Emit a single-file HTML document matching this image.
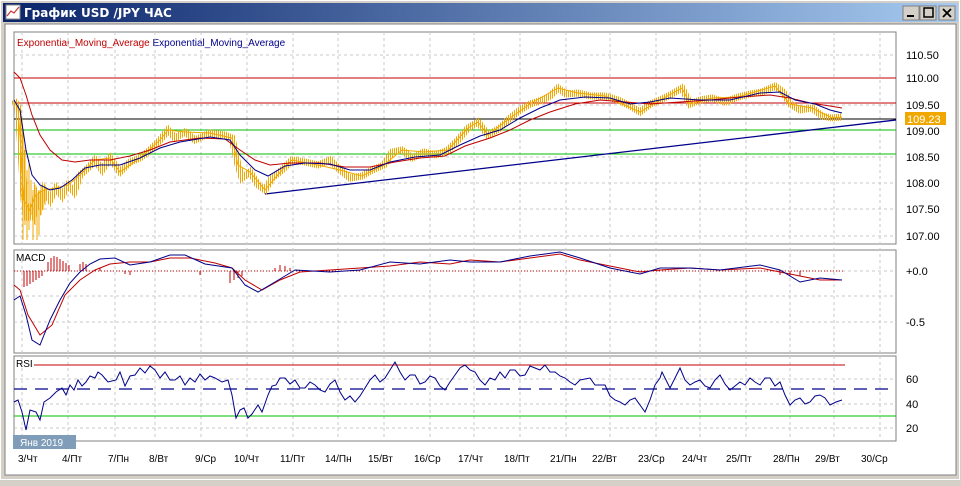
<!DOCTYPE html>
<html><head><meta charset="utf-8"><style>
body{margin:0;width:961px;height:481px;overflow:hidden;background:#d4d0c8;font-family:"Liberation Sans",sans-serif}
</style></head><body>
<svg width="961" height="481" xmlns="http://www.w3.org/2000/svg" font-family="Liberation Sans, DejaVu Sans, sans-serif">
<defs><linearGradient id="tb" x1="0" x2="1"><stop offset="0" stop-color="#0a246a"/><stop offset="1" stop-color="#a6caf0"/></linearGradient>
<pattern id="st" width="2" height="4" patternUnits="userSpaceOnUse"><rect width="1" height="4" fill="#f0a800"/></pattern></defs>
<rect x="0" y="0" width="961" height="481" fill="#d4d0c8"/>
<rect x="0.5" y="0.5" width="959" height="479" fill="none" stroke="#fff"/>
<rect x="3" y="3" width="955" height="19" fill="url(#tb)"/>
<rect x="6" y="5" width="14" height="14" fill="#fff" stroke="#888"/>
<polyline points="7,16 11,11 14,13 19,7" fill="none" stroke="#c33" stroke-width="1.2"/>
<text x="24" y="17" fill="#fff" font-weight="bold" font-size="12" font-family="DejaVu Sans, sans-serif">График USD /JPY  ЧАС</text>
<g fill="#d4d0c8" stroke="#808080"><rect x="903" y="6" width="16" height="14"/><rect x="920" y="6" width="16" height="14"/><rect x="939" y="6" width="16" height="14"/></g>
<rect x="907" y="15" width="7" height="2" fill="#000"/>
<rect x="924" y="8" width="9" height="9" fill="none" stroke="#000" stroke-width="1.5"/>
<path d="M943,9 L951,17 M951,9 L943,17" stroke="#000" stroke-width="1.8"/>
<rect x="5" y="24" width="951" height="451" fill="#fff" stroke="#808080"/>
<text x="17" y="46" font-size="10" fill="#c00000">Exponential_Moving_Average <tspan fill="#00008b">Exponential_Moving_Average</tspan></text>
<g fill="none" stroke="#808080"><rect x="14" y="32" width="882" height="212"/><rect x="14" y="250" width="882" height="103"/><rect x="14" y="356" width="882" height="85"/></g>
<g stroke="#c8c8c8" stroke-dasharray="3,3">
<path d="M22,32V441M68,32V441M115,32V441M155,32V441M201,32V441M247,32V441M293,32V441M338,32V441M384,32V441M430,32V441M474,32V441M520,32V441M566,32V441M610,32V441M656,32V441M700,32V441M746,32V441M790,32V441M834,32V441M880,32V441"/>
<path d="M14,55H896M14,105H896M14,157H896M14,183H896M14,209H896M14,236H896M14,271H896M14,296H896M14,322H896M14,379H896M14,404H896M14,428H896"/>
</g>
<line x1="14" y1="78" x2="896" y2="78" stroke="#c00000"/>
<line x1="14" y1="103" x2="896" y2="103" stroke="#c00000"/>
<line x1="14" y1="119" x2="896" y2="119" stroke="#000"/>
<line x1="14" y1="130" x2="896" y2="130" stroke="#00c000"/>
<line x1="14" y1="154" x2="896" y2="154" stroke="#00c000"/>
<line x1="265" y1="194" x2="896" y2="120" stroke="#00008b" stroke-width="1.3"/>
<path d="M21,110V200M23,130V240M25,150V225M27,170V240M29,160V230M31,180V215M33,190V240M35,185V225M37,195V240M39,190V235M41,185V215M43,190V210M45,185V205" stroke="#f0a800" stroke-width="1"/>
<polyline fill="none" stroke="url(#st)" stroke-width="7" points="14,100 18,108 21,150 24,200 27,220 30,210 33,215 36,195 40,205 44,190 50,200 56,188 62,196 68,185 74,192 80,175 88,168 95,160 102,170 110,158 120,172 130,162 140,158 150,150 160,140 168,130 175,138 185,132 195,140 210,133 225,135 232,138 238,165 242,178 250,172 258,185 265,190 272,178 282,170 292,160 305,162 318,165 330,160 340,170 350,178 362,176 372,170 384,165 392,152 402,150 412,158 424,152 436,155 448,150 458,140 468,128 478,122 488,135 500,128 510,118 520,110 530,104 542,100 550,96 558,88 566,94 578,93 590,96 605,96 618,100 630,106 640,112 650,104 660,100 670,95 682,88 690,104 700,100 712,98 725,102 738,97 750,94 762,92 775,86 783,92 790,104 800,110 812,108 822,116 832,118 842,117"/>
<polyline fill="none" stroke="#f0a800" stroke-width="1" points="14,100 18,108 21,150 24,200 30,210 36,195 44,190 56,188 68,185 80,175 95,160 110,158 120,172 140,158 160,140 168,130 185,132 210,133 232,138 238,165 250,172 265,190 282,170 292,160 318,165 340,170 362,176 384,165 402,150 424,152 448,150 468,128 478,122 488,135 510,118 530,104 558,88 578,93 605,96 640,112 660,100 682,88 690,104 712,98 738,97 775,86 790,104 812,108 832,118 842,117"/>
<polyline fill="none" stroke="#c00000" points="14,72 20,78 26,95 32,115 40,135 50,150 62,160 75,162 90,160 110,160 130,156 150,150 170,142 200,138 225,139 240,150 255,160 270,165 290,163 320,163 345,167 370,167 395,162 420,158 445,156 465,146 490,138 510,130 530,120 550,112 575,104 600,100 625,102 650,104 680,102 710,100 740,97 770,95 790,98 810,103 830,106 842,108"/>
<polyline fill="none" stroke="#00008b" points="14,100 20,110 26,150 32,175 40,185 50,190 60,188 72,180 85,168 100,165 120,165 140,158 160,148 180,142 210,137 230,140 240,155 255,170 268,176 285,166 305,163 330,164 350,170 370,170 390,162 415,157 440,155 460,145 480,136 500,130 520,118 540,108 560,100 585,97 610,98 630,104 650,102 670,98 700,100 730,100 760,93 780,92 795,100 815,104 830,110 842,113"/>
<rect x="905" y="112" width="41" height="13" fill="#f0a800"/>
<g font-size="11" fill="#000">
<text x="906" y="59">110.50</text><text x="906" y="82">110.00</text><text x="906" y="109">109.50</text><text x="907" y="123" fill="#fff">109.23</text><text x="906" y="135">109.00</text><text x="906" y="161">108.50</text><text x="906" y="187">108.00</text><text x="906" y="213">107.50</text><text x="906" y="240">107.00</text>
<text x="906" y="275">+0.0</text><text x="906" y="326">-0.5</text>
<text x="906" y="383">60</text><text x="906" y="408">40</text><text x="906" y="432">20</text>
</g>
<text x="16" y="261" font-size="10">MACD</text>
<path d="M24,271V287M27,271V286M30,271V284M33,271V282M36,271V280M39,271V278M42,271V276M48,271V262M51,271V258M54,271V256M57,271V257M60,271V259M63,271V261M66,271V263M69,271V265M80,271V264M83,271V262M86,271V264M100,271V268M125,271V274M130,271V275M200,271V275M230,271V283M234,271V280M238,271V278M242,271V276M275,271V268M280,271V265M285,271V266M290,271V268M780,271V275M790,271V276M800,271V276" stroke="#c00000" stroke-width="1"/>
<path d="M14,271H845" stroke="#c00000" stroke-dasharray="1,2"/>
<polyline fill="none" stroke="#c00000" points="14,285 20,290 28,315 40,335 52,325 65,295 80,280 95,270 110,264 130,262 150,262 170,258 190,258 215,263 232,268 245,280 262,290 280,280 300,272 330,270 360,268 390,266 420,262 450,264 470,260 500,262 530,258 560,254 580,260 610,266 640,272 660,270 690,268 720,270 760,268 780,272 800,276 820,280 842,280"/>
<polyline fill="none" stroke="#00008b" points="14,300 20,296 26,315 32,340 40,345 50,320 60,300 70,283 80,272 90,264 100,259 115,258 130,265 150,262 170,255 185,255 205,264 232,268 245,285 258,292 275,282 295,270 330,272 360,270 390,262 420,264 450,260 470,262 500,262 530,256 560,252 580,258 610,268 640,274 660,268 690,268 720,270 760,265 780,270 800,282 820,278 842,280"/>
<text x="16" y="367" font-size="10">RSI</text>
<line x1="34" y1="365" x2="845" y2="365" stroke="#c00000"/>
<line x1="14" y1="389" x2="896" y2="389" stroke="#00008b" stroke-width="1.3" stroke-dasharray="13,8"/>
<line x1="14" y1="416" x2="896" y2="416" stroke="#00c000"/>
<polyline fill="none" stroke="#00008b" points="14,402 18,400 22,412 26,430 30,410 36,412 40,420 44,402 50,398 56,392 62,388 66,395 70,385 74,390 78,380 82,386 86,382 90,376 95,378 98,372 102,375 108,382 116,380 120,372 125,386 130,376 135,375 140,368 145,373 150,366 155,370 160,378 165,372 170,380 175,380 180,376 185,385 190,378 195,382 200,374 205,380 210,376 215,378 222,382 228,380 232,395 236,418 240,410 244,408 248,418 252,414 258,405 262,412 268,395 272,386 276,385 280,378 285,378 290,384 295,380 300,388 305,388 310,382 315,385 320,390 325,392 330,384 335,380 340,392 345,400 350,396 355,402 360,396 365,388 370,380 375,375 380,382 385,378 390,370 395,362 400,372 405,380 410,375 415,375 420,384 425,382 430,376 435,378 440,386 445,390 450,382 455,375 460,368 465,365 470,370 475,372 480,380 485,385 490,378 495,380 500,372 505,378 510,370 515,370 520,376 525,375 530,366 535,368 540,370 545,365 550,372 555,372 560,376 565,378 570,382 575,385 580,380 590,378 595,385 605,385 610,396 615,400 620,402 625,405 630,400 635,398 640,405 645,412 650,400 655,385 660,378 662,372 666,380 670,388 675,378 680,368 685,380 690,385 695,382 700,380 705,386 710,388 715,380 720,375 725,384 730,390 735,386 740,382 745,385 750,378 755,382 760,385 765,378 770,378 775,386 780,382 785,395 790,405 795,400 800,398 805,404 810,402 815,396 820,395 825,398 830,405 836,402 842,400"/>
<rect x="13" y="435" width="63" height="14" fill="#7f9db9"/>
<text x="20" y="446" font-size="10" fill="#fff">Янв 2019</text>
<g font-size="10" fill="#000">
<text x="18" y="462">3/Чт</text><text x="62" y="462">4/Пт</text><text x="108" y="462">7/Пн</text><text x="149" y="462">8/Вт</text><text x="195" y="462">9/Ср</text><text x="234" y="462">10/Чт</text><text x="280" y="462">11/Пт</text><text x="325" y="462">14/Пн</text><text x="368" y="462">15/Вт</text><text x="414" y="462">16/Ср</text><text x="458" y="462">17/Чт</text><text x="504" y="462">18/Пт</text><text x="550" y="462">21/Пн</text><text x="592" y="462">22/Вт</text><text x="638" y="462">23/Ср</text><text x="682" y="462">24/Чт</text><text x="726" y="462">25/Пт</text><text x="773" y="462">28/Пн</text><text x="815" y="462">29/Вт</text><text x="861" y="462">30/Ср</text>
</g>
</svg>
</body></html>
